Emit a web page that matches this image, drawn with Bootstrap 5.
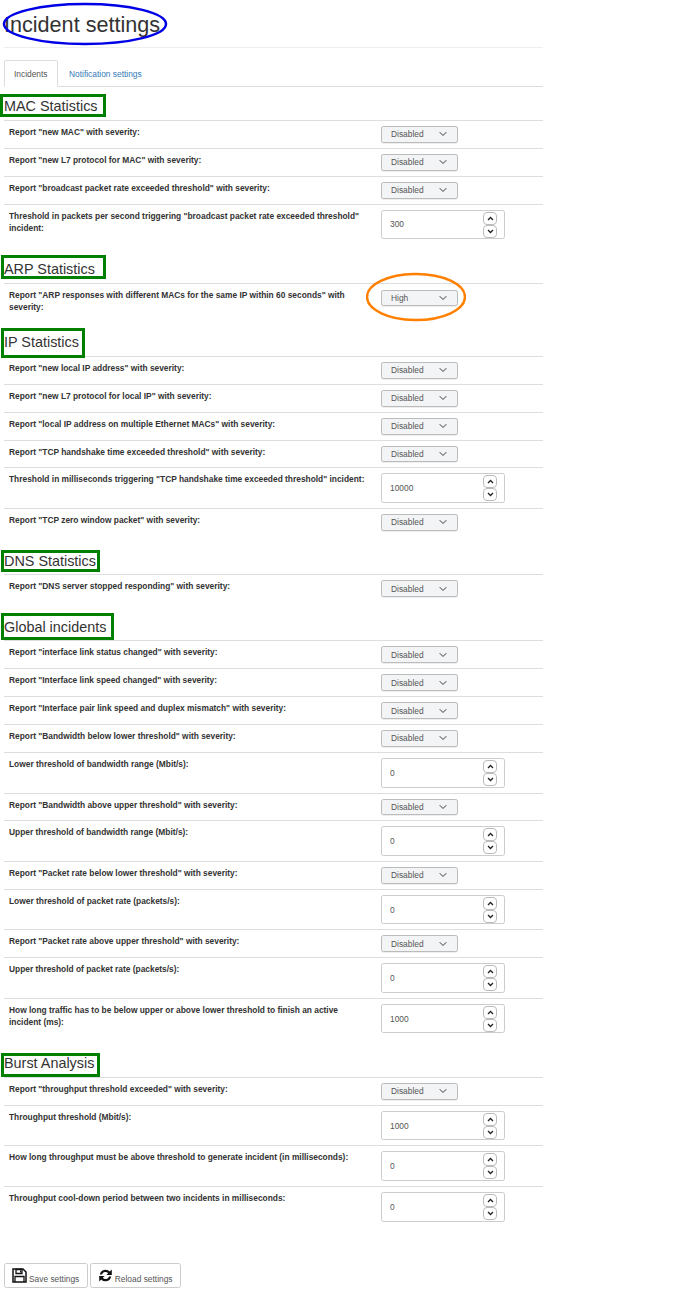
<!DOCTYPE html>
<html lang="en">
<head>
<meta charset="utf-8">
<title>Incident settings</title>
<link href="https://cdn.jsdelivr.net/npm/bootstrap@5.3.0/dist/css/bootstrap.min.css" rel="stylesheet">
<style>
body{font-family:"Liberation Sans",Arial,sans-serif;color:#333;font-size:8.4px;line-height:12px;background:#fff}
.page-wrap{width:539px;margin-left:4px;position:relative}
.page-title{font-size:21.6px;line-height:25px;font-weight:400;color:#333;margin:0;padding:12px 0 10px;border-bottom:1px solid #eee}
.title-mark{position:absolute;left:-4px;top:0;width:172px;height:48px;pointer-events:none}
.tabs-bar{margin-top:12px;border-bottom:1px solid #ddd;--bs-nav-tabs-border-color:#ddd}
.tabs-bar .nav-item:first-child{margin-right:1.5px}
.tabs-bar .nav-link{font-size:8.4px;line-height:12px;padding:6.5px 9px 6px;color:#337ab7;border-radius:2.4px 2.4px 0 0}
.tabs-bar .nav-link.active{color:#555;border-color:#ddd #ddd #fff}
.sec-title{font-size:14.4px;line-height:17px;font-weight:400;color:#333;margin:0;height:38.4px;padding-top:16.9px}
.sec-first{height:33.5px;padding-top:11px}
.sec-title span{display:inline-block;position:relative;line-height:17px}
.sec-title span::after{content:"";position:absolute;border:3px solid green;pointer-events:none;left:-3px;right:-5px;top:-3px;bottom:-3px}
.sec-title .box-mac::after{left:-4px;right:-8px;top:-3.5px;bottom:-2.5px}
.sec-title .box-arp::after{right:-11px;top:-6.5px;bottom:-.5px}
.sec-title .box-ip::after{right:-6.5px;top:-6.5px;bottom:-6.5px}
.sec-title .box-dns::after{right:-4.5px;top:-2.5px;bottom:-2.5px}
.sec-title .box-glob::after{right:-8px;top:-5.5px;bottom:-4.5px}
.sec-title .box-burst::after{right:-6px;top:-2.5px;bottom:-4.5px}
.set-table{margin:0;width:100%;table-layout:fixed;--bs-table-color:#333;--bs-table-border-color:#ddd}
.set-table td{border-top:1px solid #ddd;border-bottom:0;padding:5px;vertical-align:top;font-size:8.4px;line-height:12px;box-shadow:none}
.set-table td.lbl{width:372px;font-weight:700}
.sel-sev.form-select{width:77px;height:16.87px;min-height:0;font-size:8.4px;line-height:12px;padding:0 20px 0 9px;color:#555;background-color:#f3f4f6;border:1px solid #bbb;border-radius:2.4px;background-position:right 9px center;background-size:10px 8px;box-shadow:0 1px 0 #eee}
.arp-cell{position:relative;padding-top:6px!important}
.arp-mark{position:absolute;left:-10px;top:-12px;width:100px;height:50px;pointer-events:none}
.num-wrap{position:relative;width:124px;height:29.6px}
.num-wrap .form-control{width:124px;height:29.6px;min-height:0;font-size:8.4px;line-height:12px;padding:0 8px;color:#555;border:1px solid #ccc;border-radius:2.4px;box-shadow:none}
.spin-col{position:absolute;right:8px;top:2px;display:flex;flex-direction:column}
.spin-key{width:14px;height:13px;padding:0;border:1px solid #bbb;border-radius:4px;background:#fff;display:flex;align-items:center;justify-content:center;line-height:0}
.foot-bar{margin-top:36px;display:flex;gap:2px}
.foot-btn{font-size:8.4px;line-height:12px;color:#555;background:#fff;border:1px solid #ccc;border-radius:2.4px;padding:0 7.5px 0 7px;height:25.5px;display:flex;align-items:center;gap:2px}
.foot-btn span{padding-top:8px}
</style>
</head>
<body>
<div class="page-wrap">
<h1 class="page-title">Incident settings</h1>
<svg class="title-mark" viewBox="0 0 172 48"><ellipse cx="85" cy="24" rx="81" ry="20" fill="none" stroke="#0000e6" stroke-width="2.5"/></svg>
<ul class="nav nav-tabs tabs-bar">
<li class="nav-item"><a class="nav-link active" href="#">Incidents</a></li>
<li class="nav-item"><a class="nav-link" href="#">Notification settings</a></li>
</ul>

<h2 class="sec-title sec-first"><span class="box-mac">MAC Statistics</span></h2>
<table class="table set-table"><tbody>
<tr><td class="lbl">Report "new MAC" with severity:</td><td><select class="form-select sel-sev"><option>Disabled</option></select></td></tr>
<tr><td class="lbl">Report "new L7 protocol for MAC" with severity:</td><td><select class="form-select sel-sev"><option>Disabled</option></select></td></tr>
<tr><td class="lbl">Report "broadcast packet rate exceeded threshold" with severity:</td><td><select class="form-select sel-sev"><option>Disabled</option></select></td></tr>
<tr><td class="lbl">Threshold in packets per second triggering "broadcast packet rate exceeded threshold" incident:</td><td><div class="num-wrap"><input class="form-control" value="300"><div class="spin-col"><button class="spin-key"><svg width="7" height="5" viewBox="0 0 7 5"><path d="M1 4l2.500-2.500 2.500 2.500" fill="none" stroke="#222" stroke-width="1.300"/></svg></button><button class="spin-key"><svg width="7" height="5" viewBox="0 0 7 5"><path d="M1 1l2.500 2.500 2.500-2.500" fill="none" stroke="#222" stroke-width="1.300"/></svg></button></div></div></td></tr>
</tbody></table>

<h2 class="sec-title"><span class="box-arp">ARP Statistics</span></h2>
<table class="table set-table"><tbody>
<tr><td class="lbl">Report "ARP responses with different MACs for the same IP within 60 seconds" with severity:</td><td class="arp-cell"><select class="form-select sel-sev"><option>High</option></select><svg class="arp-mark" viewBox="0 0 100 50"><ellipse cx="50" cy="25" rx="49" ry="23" fill="none" stroke="#ff8000" stroke-width="2.500"/></svg></td></tr>
</tbody></table>

<h2 class="sec-title"><span class="box-ip">IP Statistics</span></h2>
<table class="table set-table"><tbody>
<tr><td class="lbl">Report "new local IP address" with severity:</td><td><select class="form-select sel-sev"><option>Disabled</option></select></td></tr>
<tr><td class="lbl">Report "new L7 protocol for local IP" with severity:</td><td><select class="form-select sel-sev"><option>Disabled</option></select></td></tr>
<tr><td class="lbl">Report "local IP address on multiple Ethernet MACs" with severity:</td><td><select class="form-select sel-sev"><option>Disabled</option></select></td></tr>
<tr><td class="lbl">Report "TCP handshake time exceeded threshold" with severity:</td><td><select class="form-select sel-sev"><option>Disabled</option></select></td></tr>
<tr><td class="lbl">Threshold in milliseconds triggering "TCP handshake time exceeded threshold" incident:</td><td><div class="num-wrap"><input class="form-control" value="10000"><div class="spin-col"><button class="spin-key"><svg width="7" height="5" viewBox="0 0 7 5"><path d="M1 4l2.500-2.500 2.500 2.500" fill="none" stroke="#222" stroke-width="1.300"/></svg></button><button class="spin-key"><svg width="7" height="5" viewBox="0 0 7 5"><path d="M1 1l2.500 2.500 2.500-2.500" fill="none" stroke="#222" stroke-width="1.300"/></svg></button></div></div></td></tr>
<tr><td class="lbl">Report "TCP zero window packet" with severity:</td><td><select class="form-select sel-sev"><option>Disabled</option></select></td></tr>
</tbody></table>

<h2 class="sec-title"><span class="box-dns">DNS Statistics</span></h2>
<table class="table set-table"><tbody>
<tr><td class="lbl">Report "DNS server stopped responding" with severity:</td><td><select class="form-select sel-sev"><option>Disabled</option></select></td></tr>
</tbody></table>

<h2 class="sec-title"><span class="box-glob">Global incidents</span></h2>
<table class="table set-table"><tbody>
<tr><td class="lbl">Report "interface link status changed" with severity:</td><td><select class="form-select sel-sev"><option>Disabled</option></select></td></tr>
<tr><td class="lbl">Report "Interface link speed changed" with severity:</td><td><select class="form-select sel-sev"><option>Disabled</option></select></td></tr>
<tr><td class="lbl">Report "Interface pair link speed and duplex mismatch" with severity:</td><td><select class="form-select sel-sev"><option>Disabled</option></select></td></tr>
<tr><td class="lbl">Report "Bandwidth below lower threshold" with severity:</td><td><select class="form-select sel-sev"><option>Disabled</option></select></td></tr>
<tr><td class="lbl">Lower threshold of bandwidth range (Mbit/s):</td><td><div class="num-wrap"><input class="form-control" value="0"><div class="spin-col"><button class="spin-key"><svg width="7" height="5" viewBox="0 0 7 5"><path d="M1 4l2.500-2.500 2.500 2.500" fill="none" stroke="#222" stroke-width="1.300"/></svg></button><button class="spin-key"><svg width="7" height="5" viewBox="0 0 7 5"><path d="M1 1l2.500 2.500 2.500-2.500" fill="none" stroke="#222" stroke-width="1.300"/></svg></button></div></div></td></tr>
<tr><td class="lbl">Report "Bandwidth above upper threshold" with severity:</td><td><select class="form-select sel-sev"><option>Disabled</option></select></td></tr>
<tr><td class="lbl">Upper threshold of bandwidth range (Mbit/s):</td><td><div class="num-wrap"><input class="form-control" value="0"><div class="spin-col"><button class="spin-key"><svg width="7" height="5" viewBox="0 0 7 5"><path d="M1 4l2.500-2.500 2.500 2.500" fill="none" stroke="#222" stroke-width="1.300"/></svg></button><button class="spin-key"><svg width="7" height="5" viewBox="0 0 7 5"><path d="M1 1l2.500 2.500 2.500-2.500" fill="none" stroke="#222" stroke-width="1.300"/></svg></button></div></div></td></tr>
<tr><td class="lbl">Report "Packet rate below lower threshold" with severity:</td><td><select class="form-select sel-sev"><option>Disabled</option></select></td></tr>
<tr><td class="lbl">Lower threshold of packet rate (packets/s):</td><td><div class="num-wrap"><input class="form-control" value="0"><div class="spin-col"><button class="spin-key"><svg width="7" height="5" viewBox="0 0 7 5"><path d="M1 4l2.500-2.500 2.500 2.500" fill="none" stroke="#222" stroke-width="1.300"/></svg></button><button class="spin-key"><svg width="7" height="5" viewBox="0 0 7 5"><path d="M1 1l2.500 2.500 2.500-2.500" fill="none" stroke="#222" stroke-width="1.300"/></svg></button></div></div></td></tr>
<tr><td class="lbl">Report "Packet rate above upper threshold" with severity:</td><td><select class="form-select sel-sev"><option>Disabled</option></select></td></tr>
<tr><td class="lbl">Upper threshold of packet rate (packets/s):</td><td><div class="num-wrap"><input class="form-control" value="0"><div class="spin-col"><button class="spin-key"><svg width="7" height="5" viewBox="0 0 7 5"><path d="M1 4l2.500-2.500 2.500 2.500" fill="none" stroke="#222" stroke-width="1.300"/></svg></button><button class="spin-key"><svg width="7" height="5" viewBox="0 0 7 5"><path d="M1 1l2.500 2.500 2.500-2.500" fill="none" stroke="#222" stroke-width="1.300"/></svg></button></div></div></td></tr>
<tr><td class="lbl">How long traffic has to be below upper or above lower threshold to finish an active incident (ms):</td><td><div class="num-wrap"><input class="form-control" value="1000"><div class="spin-col"><button class="spin-key"><svg width="7" height="5" viewBox="0 0 7 5"><path d="M1 4l2.500-2.500 2.500 2.500" fill="none" stroke="#222" stroke-width="1.300"/></svg></button><button class="spin-key"><svg width="7" height="5" viewBox="0 0 7 5"><path d="M1 1l2.500 2.500 2.500-2.500" fill="none" stroke="#222" stroke-width="1.300"/></svg></button></div></div></td></tr>
</tbody></table>

<h2 class="sec-title"><span class="box-burst">Burst Analysis</span></h2>
<table class="table set-table"><tbody>
<tr><td class="lbl">Report "throughput threshold exceeded" with severity:</td><td><select class="form-select sel-sev"><option>Disabled</option></select></td></tr>
<tr><td class="lbl">Throughput threshold (Mbit/s):</td><td><div class="num-wrap"><input class="form-control" value="1000"><div class="spin-col"><button class="spin-key"><svg width="7" height="5" viewBox="0 0 7 5"><path d="M1 4l2.500-2.500 2.500 2.500" fill="none" stroke="#222" stroke-width="1.300"/></svg></button><button class="spin-key"><svg width="7" height="5" viewBox="0 0 7 5"><path d="M1 1l2.500 2.500 2.500-2.500" fill="none" stroke="#222" stroke-width="1.300"/></svg></button></div></div></td></tr>
<tr><td class="lbl">How long throughput must be above threshold to generate incident (in milliseconds):</td><td><div class="num-wrap"><input class="form-control" value="0"><div class="spin-col"><button class="spin-key"><svg width="7" height="5" viewBox="0 0 7 5"><path d="M1 4l2.500-2.500 2.500 2.500" fill="none" stroke="#222" stroke-width="1.300"/></svg></button><button class="spin-key"><svg width="7" height="5" viewBox="0 0 7 5"><path d="M1 1l2.500 2.500 2.500-2.500" fill="none" stroke="#222" stroke-width="1.300"/></svg></button></div></div></td></tr>
<tr><td class="lbl">Throughput cool-down period between two incidents in milliseconds:</td><td><div class="num-wrap"><input class="form-control" value="0"><div class="spin-col"><button class="spin-key"><svg width="7" height="5" viewBox="0 0 7 5"><path d="M1 4l2.500-2.500 2.500 2.500" fill="none" stroke="#222" stroke-width="1.300"/></svg></button><button class="spin-key"><svg width="7" height="5" viewBox="0 0 7 5"><path d="M1 1l2.500 2.500 2.500-2.500" fill="none" stroke="#222" stroke-width="1.300"/></svg></button></div></div></td></tr>
</tbody></table>

<div class="foot-bar">
<button class="btn foot-btn"><svg width="15" height="15" viewBox="0 0 15 15"><path d="M1 1h10l3 3v10H1z" fill="none" stroke="#111" stroke-width="1.500"/><path d="M4 1.500h6v4H4z" fill="none" stroke="#111" stroke-width="1.300"/><path d="M3 14V8.500h9V14" fill="none" stroke="#111" stroke-width="1.300"/><path d="M8 2.500h1.200v2H8z" fill="#111"/></svg><span>Save settings</span></button>
<button class="btn foot-btn"><svg width="15" height="15" viewBox="0 0 15 15"><path d="M1.800 6.500A5.800 5.800 0 0 1 11.800 3.600L13.800 1.600V7H8.400L10.200 5.200A3.600 3.600 0 0 0 4 6.500Z" fill="#111"/><path d="M13.200 8.500A5.800 5.800 0 0 1 3.200 11.400L1.200 13.400V8H6.600L4.800 9.800A3.600 3.600 0 0 0 11 8.500Z" fill="#111"/></svg><span>Reload settings</span></button>
</div>
</div>
<script src="https://cdn.jsdelivr.net/npm/bootstrap@5.3.0/dist/js/bootstrap.bundle.min.js"></script>
</body>
</html>
